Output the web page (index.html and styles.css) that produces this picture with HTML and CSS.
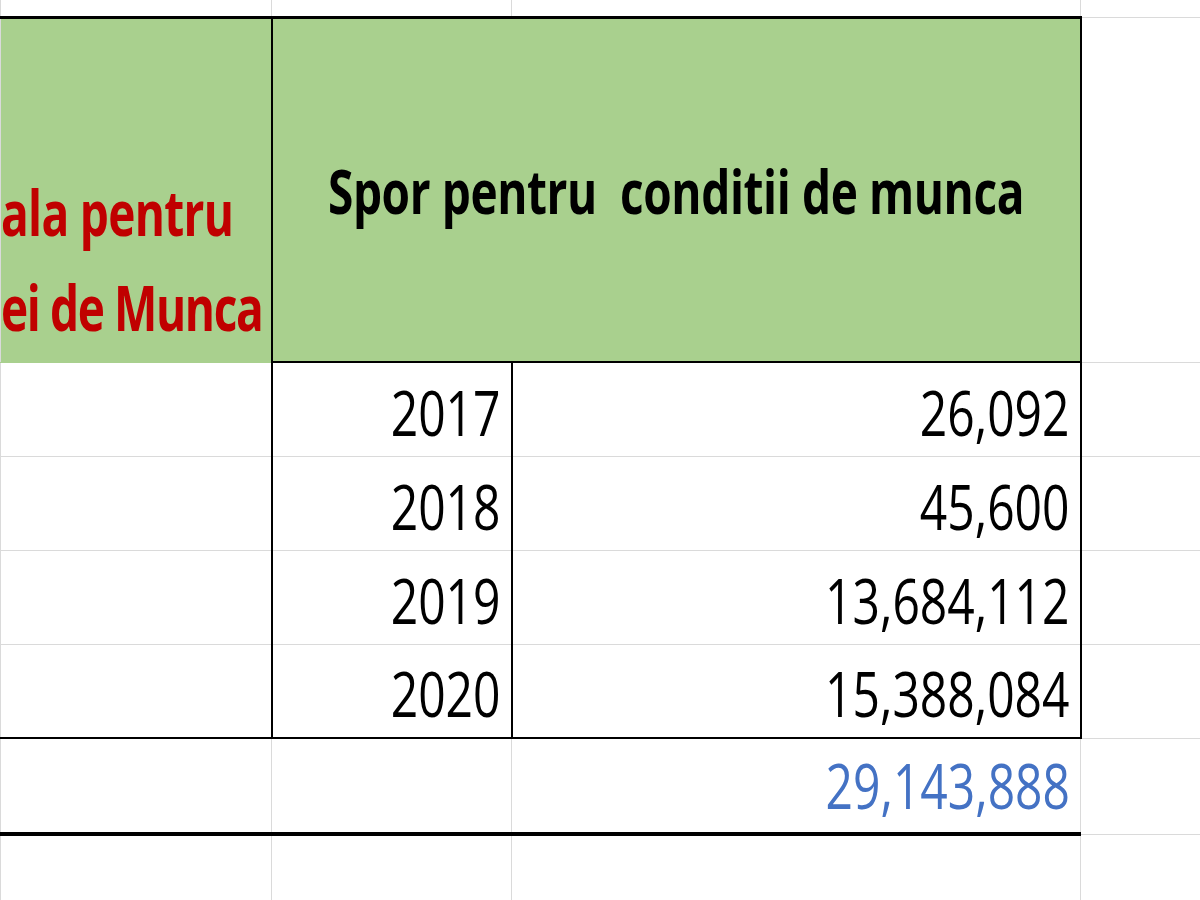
FILE: index.html
```html
<!DOCTYPE html>
<html lang="ro">
<head>
<meta charset="utf-8">
<title>Spor pentru conditii de munca</title>
<link rel="stylesheet" href="styles.css">
</head>
<body>
<table class="sheet">
  <colgroup>
    <col class="col-a">
    <col class="col-b">
    <col class="col-c">
    <col class="col-d">
  </colgroup>
  <tr class="row-top">
    <td></td><td></td><td></td><td class="out"></td>
  </tr>
  <tr class="row-head">
    <td class="head-left">
      <span class="red-line red-line-1">ala pentru</span>
      <span class="red-line red-line-2">ei de Munca</span>
    </td>
    <td class="head-main" colspan="2"><span class="t">Spor pentru&nbsp; conditii de munca</span></td>
    <td class="out"></td>
  </tr>
  <tr class="row-data">
    <td></td><td class="year"><span class="t">2017</span></td><td class="amount"><span class="t">26,092</span></td><td class="out"></td>
  </tr>
  <tr class="row-data">
    <td></td><td class="year"><span class="t">2018</span></td><td class="amount"><span class="t">45,600</span></td><td class="out"></td>
  </tr>
  <tr class="row-data">
    <td></td><td class="year"><span class="t">2019</span></td><td class="amount"><span class="t">13,684,112</span></td><td class="out"></td>
  </tr>
  <tr class="row-data last">
    <td></td><td class="year"><span class="t">2020</span></td><td class="amount"><span class="t">15,388,084</span></td><td class="out"></td>
  </tr>
  <tr class="row-total">
    <td></td><td></td><td class="total"><span class="t">29,143,888</span></td><td class="out"></td>
  </tr>
  <tr class="row-empty">
    <td></td><td></td><td></td><td class="out"></td>
  </tr>
</table>
</body>
</html>
```

FILE: styles.css
```css
html, body {
  margin: 0;
  padding: 0;
  background: #ffffff;
  overflow: hidden;
  width: 1200px;
  height: 900px;
}

.sheet {
  border-collapse: collapse;
  table-layout: fixed;
  width: 1200px;
  font-family: "Open Sans", "DejaVu Sans", sans-serif;
  font-size: 46px;
  line-height: 46px;
  color: #000000;
}

.col-a { width: 271px; }
.col-b { width: 240px; }
.col-c { width: 569px; }
.col-d { width: 120px; }

.sheet td {
  border: 1px solid #dadada;
  padding: 0;
  white-space: nowrap;
}

/* text drawn taller than wide, like the zoomed spreadsheet */
.t {
  display: inline-block;
  line-height: inherit;
  transform: scaleY(1.33);
  transform-origin: 50% 41px;
}

.row-top { height: 17px; }
.row-top td { border-top: none; }
.row-top td:nth-child(-n+3) { border-bottom: 3px solid #000000; }

.row-head { height: 345px; }

.head-left {
  background: #a9d08e;
  color: #c00000;
  font-weight: bold;
  text-align: right;
  vertical-align: bottom;
  padding-bottom: 1px !important;
  border-right: 2px solid #000000 !important;
  border-bottom: 1px solid #a9d08e !important;
}

.red-line {
  display: block;
  line-height: 95px;
  transform: scaleY(1.36);
  transform-origin: 50% 65px;
}
.red-line-1 { padding-right: 47px; letter-spacing: -0.7px; }
.red-line-2 { padding-right: 19px; letter-spacing: -1.4px; }

.head-main {
  background: #a9d08e;
  font-weight: bold;
  text-align: center;
  vertical-align: middle;
  letter-spacing: -0.4px;
  padding-top: 12px !important;
  border-right: 2px solid #000000 !important;
  border-bottom: 2px solid #000000 !important;
}

.row-data { height: 94px; }

.year, .amount, .total {
  text-align: right;
  vertical-align: bottom;
  font-size: 48px;
  line-height: 48px;
  font-weight: 500;
}

.year .t, .amount .t, .total .t {
  transform: scaleY(1.28);
  transform-origin: 50% 43px;
}

.year {
  padding-right: 10px !important;
  padding-bottom: 14px !important;
  border-left: 2px solid #000000 !important;
  border-right: 2px solid #000000 !important;
}

.amount {
  padding-right: 10px !important;
  padding-bottom: 14px !important;
  border-right: 2px solid #000000 !important;
}

.row-data.last td:nth-child(-n+3) { border-bottom: 2px solid #000000; }

.row-total { height: 96px; }
.row-total td:nth-child(-n+3) { border-bottom: 4px solid #000000; }

.total {
  color: #4472c4;
  padding-right: 10px !important;
  padding-bottom: 17px !important;
}

.row-empty { height: 94px; }
```
